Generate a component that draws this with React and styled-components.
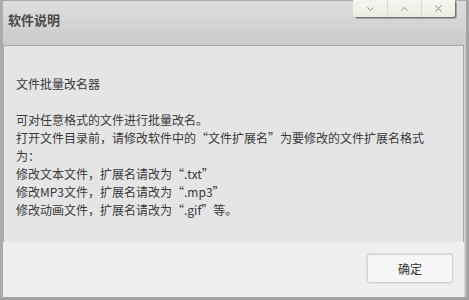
import React from 'react'
import styled, { createGlobalStyle } from 'styled-components'

const GlobalStyle = createGlobalStyle`
  html, body {
    margin: 0;
    padding: 0;
    background: #a3a3a3;
  }
  * { box-sizing: border-box; }
`

const Window = styled.div`
  width: 469px;
  height: 300px;
  display: flex;
  flex-direction: column;
  border-top: 1px solid #a9a9a9;
  border-left: 3px solid #ababab;
  border-right: 3px solid #a2a2a2;
  border-bottom: 3px solid #a2a2a2;
  background: #cfcfcf;
  font-family: "Noto Sans CJK SC", "Microsoft YaHei", sans-serif;
`

const TitleBar = styled.div`
  height: 44px;
  flex: none;
  display: flex;
  justify-content: space-between;
  background: linear-gradient(#dedede, #cacaca);
`

const Title = styled.h1`
  margin: 0;
  padding: 10px 0 0 5px;
  font-size: 13px;
  font-weight: bold;
  line-height: 18px;
  color: #4a4a4a;
`

const Controls = styled.div`
  display: flex;
  align-self: flex-start;
  margin: -1px 11px 0 0;
  box-shadow: 1px 1px 1px rgba(0, 0, 0, 0.35), 2px 2px 0 #a8a8a8;
  border-radius: 0 0 3px 3px;
  overflow: hidden;
`

const CtrlButton = styled.div`
  width: 34px;
  height: 17px;
  display: flex;
  align-items: center;
  justify-content: center;
  background: linear-gradient(#f6f6f1, #ebebe1);
  border-left: ${p => (p.first ? 'none' : '1px solid #d9d9d2')};
  color: #8a8a8a;
`

const Panel = styled.div`
  flex: 1;
  display: flex;
  flex-direction: column;
  margin-right: 2px;
`

const Body = styled.div`
  height: 197px;
  border: 1px solid #a9a9a9;
  border-bottom: none;
  background: #e5e5e5;
  padding: 29px 0 0 12px;
`

const Line = styled.div`
  font-size: 12px;
  line-height: 18px;
  height: 18px;
  color: #3a3a3a;
  white-space: nowrap;
`

const Footer = styled.div`
  flex: 1;
  background: #efefef;
  display: flex;
  justify-content: flex-end;
  padding: 12px 11px 0 0;
`

const OkButton = styled.button`
  width: 86px;
  height: 29px;
  border: 1px solid #d2d2d2;
  border-radius: 3px;
  background: #f6f6f6;
  box-shadow: 0 0 2px rgba(0, 0, 0, 0.2), inset 0 0 1px #ffffff;
  font-family: inherit;
  font-size: 12px;
  color: #333;
  padding: 0;
  cursor: pointer;
`

const Chevron = ({ up }) => (
  <svg width="7" height="4" viewBox="0 0 7 4">
    <path
      d={up ? 'M0.5 3.5 L3.5 0.5 L6.5 3.5' : 'M0.5 0.5 L3.5 3.5 L6.5 0.5'}
      fill="none"
      stroke="currentColor"
      strokeWidth="1"
    />
  </svg>
)

const Cross = () => (
  <svg width="7" height="7" viewBox="0 0 7 7">
    <path d="M0.5 0.5 L6.5 6.5 M6.5 0.5 L0.5 6.5" fill="none" stroke="currentColor" strokeWidth="1" />
  </svg>
)

const lines = [
  '文件批量改名器',
  '',
  '可对任意格式的文件进行批量改名。',
  '打开文件目录前，请修改软件中的“文件扩展名”为要修改的文件扩展名格式',
  '为：',
  '修改文本文件，扩展名请改为“.txt”',
  '修改MP3文件，扩展名请改为“.mp3”',
  '修改动画文件，扩展名请改为“.gif”等。',
]

export default function App() {
  return (
    <>
      <GlobalStyle />
      <Window>
        <TitleBar>
          <Title>软件说明</Title>
          <Controls>
            <CtrlButton first><Chevron /></CtrlButton>
            <CtrlButton><Chevron up /></CtrlButton>
            <CtrlButton><Cross /></CtrlButton>
          </Controls>
        </TitleBar>
        <Panel>
          <Body>
            {lines.map((text, i) => (
              <Line key={i}>{text}</Line>
            ))}
          </Body>
          <Footer>
            <OkButton>确定</OkButton>
          </Footer>
        </Panel>
      </Window>
    </>
  )
}
